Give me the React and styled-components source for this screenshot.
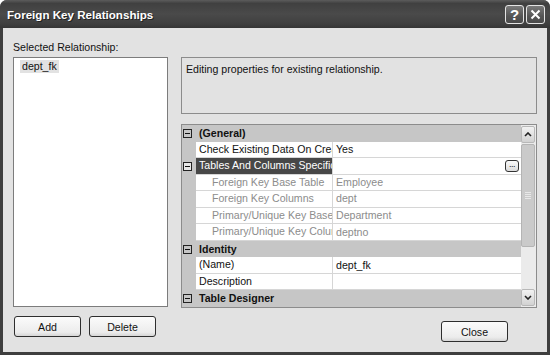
import styled, { createGlobalStyle } from "styled-components";

const GlobalStyle = createGlobalStyle`
  html, body {
    margin: 0;
    padding: 0;
    background: #ffffff;
  }
  body {
    font-family: "Liberation Sans", Arial, sans-serif;
    font-size: 10.6px;
    color: #111;
  }
`;

const Window = styled.div`
  width: 550px;
  height: 355px;
  display: flex;
  flex-direction: column;
  background: #3e3e3e;
  border-radius: 7px 7px 0 0;
  overflow: hidden;
  box-sizing: border-box;
`;

const TitleBar = styled.div`
  height: 28px;
  flex: none;
  display: flex;
  align-items: center;
  padding: 0 5px 0 7px;
  background: linear-gradient(
    to bottom,
    #5c5c5c 0%,
    #404040 12%,
    #4a4a4a 50%,
    #3f3f3f 85%,
    #353535 100%
  );
`;

const Title = styled.div`
  flex: 1;
  color: #fff;
  font-weight: bold;
  font-size: 11.6px;
  text-shadow: 1px 1px 0 #222;
  padding-top: 1px;
`;

const TitleButton = styled.div`
  width: 19px;
  height: 19px;
  margin-left: 2px;
  border: 1px solid #e4e4e4;
  border-radius: 3px;
  background: linear-gradient(to bottom, #7a7a7a, #555 60%, #4a4a4a);
  display: flex;
  align-items: center;
  justify-content: center;
  color: #fff;
  font-weight: bold;
  font-size: 15px;
  box-sizing: border-box;
`;

const Body = styled.div`
  flex: 1;
  margin: 0 3px 3px;
  background: #e2e2e2;
  display: flex;
  padding: 12px 10px 0;
  gap: 13px;
`;

const LeftColumn = styled.div`
  width: 155px;
  display: flex;
  flex-direction: column;
`;

const Label = styled.div`
  height: 17px;
  line-height: 14px;
`;

const ListBox = styled.div`
  height: 250px;
  background: #fff;
  border: 1px solid #7c7c7c;
  box-sizing: border-box;
  padding: 2px 0 0 6px;
`;

const ListItem = styled.div`
  display: inline-block;
  background: #e2e2e2;
  padding: 0 2px;
  line-height: 13px;
`;

const ButtonRow = styled.div`
  display: flex;
  gap: 8px;
  margin-top: ${(p) => p.$top || 9}px;
  padding-left: ${(p) => p.$indent || 0}px;
  justify-content: ${(p) => (p.$end ? "flex-end" : "flex-start")};
  padding-right: ${(p) => p.$right || 0}px;
`;

const Button = styled.button`
  width: 67px;
  height: 21px;
  border: 1px solid #2e2e2e;
  border-radius: 3px;
  background: linear-gradient(to bottom, #fbfbfb, #ececec 80%, #d6d6d6);
  font-family: "Liberation Sans", Arial, sans-serif;
  font-size: 10.6px;
  color: #111;
  padding: 0;
`;

const RightColumn = styled.div`
  flex: 1;
  display: flex;
  flex-direction: column;
  padding-top: 17px;
`;

const Description = styled.div`
  height: 57px;
  border: 1px solid #8c8c8c;
  box-sizing: border-box;
  padding: 5px 4px;
  line-height: 13px;
`;

const PropGrid = styled.div`
  height: 184px;
  margin-top: 10px;
  border: 1px solid #8c8c8c;
  box-sizing: border-box;
  display: flex;
  background: #fff;
`;

const Rows = styled.div`
  flex: 1;
  overflow: hidden;
`;

const Row = styled.div`
  height: 16.55px;
  display: flex;
  background: #c6c6c6;
`;

const Gutter = styled.div`
  width: 14px;
  flex: none;
  display: flex;
  align-items: center;
  padding-left: 1px;
  box-sizing: border-box;
`;

const Toggle = styled.div`
  width: 9px;
  height: 9px;
  border: 1px solid #222;
  box-sizing: border-box;
  position: relative;
  background: ${(p) => (p.$light ? "#e8e8e8" : "transparent")};
  &::after {
    content: "";
    position: absolute;
    left: 1px;
    right: 1px;
    top: 3px;
    height: 1px;
    background: #111;
  }
`;

const CategoryText = styled.div`
  font-weight: bold;
  padding-left: 3px;
  line-height: 16px;
`;

const NameCell = styled.div`
  width: 137px;
  flex: none;
  box-sizing: border-box;
  border-bottom: 1px solid #d6d6d6;
  border-right: 1px solid #d6d6d6;
  padding-left: ${(p) => (p.$sub ? 16 : 3)}px;
  background: ${(p) => (p.$selected ? "#474747" : "#fff")};
  color: ${(p) => (p.$selected ? "#fff" : p.$sub ? "#8c8c8c" : "#111")};
  white-space: nowrap;
  overflow: hidden;
  line-height: 15px;
`;

const ValueCell = styled.div`
  flex: 1;
  box-sizing: border-box;
  border-bottom: 1px solid #d6d6d6;
  background: #fff;
  padding-left: 3px;
  color: ${(p) => (p.$sub ? "#8c8c8c" : "#111")};
  white-space: nowrap;
  overflow: hidden;
  line-height: 15px;
  display: flex;
  align-items: center;
  justify-content: space-between;
`;

const Ellipsis = styled.div`
  width: 14px;
  height: 12px;
  margin-right: 2px;
  border: 1px solid #333;
  border-radius: 3px;
  box-sizing: border-box;
  background: linear-gradient(to bottom, #fafafa, #dcdcdc);
  font-size: 9px;
  line-height: 7px;
  text-align: center;
  color: #111;
  letter-spacing: -0.5px;
`;

const ScrollBar = styled.div`
  width: 15px;
  flex: none;
  background: #ebebeb;
  display: flex;
  flex-direction: column;
  padding: 1px 1px 1px 0;
  box-sizing: border-box;
`;

const ScrollButton = styled.div`
  height: 15px;
  border: 1px solid #b8b8b8;
  border-radius: 2px;
  background: linear-gradient(to bottom, #f2f2f2, #d2d2d2);
  display: flex;
  align-items: center;
  justify-content: center;
`;

const Thumb = styled.div`
  height: 101px;
  margin-top: 1px;
  border: 1px solid #b4b4b4;
  border-radius: 2px;
  background: #cacaca;
  display: flex;
  flex-direction: column;
  align-items: center;
  justify-content: center;
  gap: 1px;
`;

const Grip = styled.div`
  width: 6px;
  height: 1px;
  background: #e8e8e8;
`;

const Track = styled.div`
  flex: 1;
`;

const Chevron = ({ up }) => (
  <svg width="8" height="5" viewBox="0 0 8 5">
    <path
      d={up ? "M1 4 L4 1 L7 4" : "M1 1 L4 4 L7 1"}
      fill="none"
      stroke="#222"
      strokeWidth="1.6"
    />
  </svg>
);

const rows = [
  { type: "cat", name: "(General)" },
  { name: "Check Existing Data On Creation Or Re-Enabling", value: "Yes" },
  { name: "Tables And Columns Specification", value: "", toggle: true, selected: true, button: true },
  { name: "Foreign Key Base Table", value: "Employee", sub: true },
  { name: "Foreign Key Columns", value: "dept", sub: true },
  { name: "Primary/Unique Key Base Table", value: "Department", sub: true },
  { name: "Primary/Unique Key Columns", value: "deptno", sub: true },
  { type: "cat", name: "Identity" },
  { name: "(Name)", value: "dept_fk" },
  { name: "Description", value: "" },
  { type: "cat", name: "Table Designer" },
];

function App() {
  return (
    <>
      <GlobalStyle />
      <Window>
        <TitleBar>
          <Title>Foreign Key Relationships</Title>
          <TitleButton>?</TitleButton>
          <TitleButton>
            <svg width="11" height="11" viewBox="0 0 11 11">
              <path d="M1.5 1.5 L9.5 9.5 M9.5 1.5 L1.5 9.5" stroke="#fff" strokeWidth="2" />
            </svg>
          </TitleButton>
        </TitleBar>
        <Body>
          <LeftColumn>
            <Label>Selected Relationship:</Label>
            <ListBox>
              <ListItem>dept_fk</ListItem>
            </ListBox>
            <ButtonRow $indent={1}>
              <Button>Add</Button>
              <Button>Delete</Button>
            </ButtonRow>
          </LeftColumn>
          <RightColumn>
            <Description>Editing properties for existing relationship.</Description>
            <PropGrid>
              <Rows>
                {rows.map((r, i) =>
                  r.type === "cat" ? (
                    <Row key={i}>
                      <Gutter>
                        <Toggle />
                      </Gutter>
                      <CategoryText>{r.name}</CategoryText>
                    </Row>
                  ) : (
                    <Row key={i}>
                      <Gutter>{r.toggle && <Toggle $light />}</Gutter>
                      <NameCell $sub={r.sub} $selected={r.selected}>
                        {r.name}
                      </NameCell>
                      <ValueCell $sub={r.sub}>
                        <span>{r.value}</span>
                        {r.button && <Ellipsis>...</Ellipsis>}
                      </ValueCell>
                    </Row>
                  )
                )}
              </Rows>
              <ScrollBar>
                <ScrollButton>
                  <Chevron up />
                </ScrollButton>
                <Thumb>
                  <Grip />
                  <Grip />
                  <Grip />
                  <Grip />
                </Thumb>
                <Track />
                <ScrollButton>
                  <Chevron />
                </ScrollButton>
              </ScrollBar>
            </PropGrid>
            <ButtonRow $end $right={29} $top={13}>
              <Button>Close</Button>
            </ButtonRow>
          </RightColumn>
        </Body>
      </Window>
    </>
  );
}

export default App;
